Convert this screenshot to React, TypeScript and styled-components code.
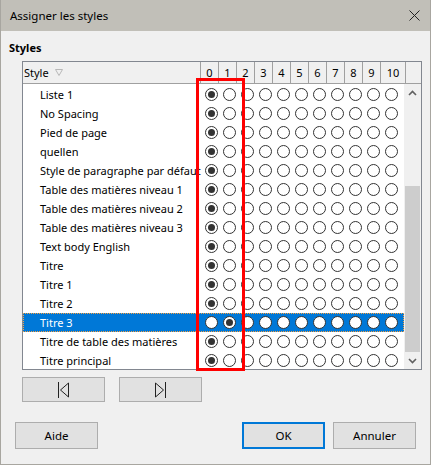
import React from 'react';
import styled, { createGlobalStyle } from 'styled-components';

const GlobalStyle = createGlobalStyle`
  html, body {
    margin: 0;
    padding: 0;
    background: #f0f0f0;
  }
  body {
    font-family: 'Noto Sans', 'Open Sans', sans-serif;
    font-size: 11px;
    color: #000;
  }
`;

const Window = styled.div`
  width: 431px;
  height: 465px;
  box-sizing: border-box;
  border: 1px solid #a8a6a0;
  border-top: none;
  background: #f0f0f0;
  display: flex;
  flex-direction: column;
`;

const TitleBar = styled.div`
  height: 31px;
  flex: none;
  background: #c1bfb8;
  display: flex;
  align-items: center;
  justify-content: space-between;
  padding: 0 10px 0 9px;
  font-size: 11.5px;
`;

const Content = styled.div`
  flex: 1;
  display: flex;
  flex-direction: column;
  padding: 9px 14px 15px 8px;
`;

const SectionLabel = styled.div`
  font-weight: bold;
  line-height: 16px;
  margin-bottom: 5px;
`;

const TableWrap = styled.div`
  position: relative;
  margin-left: 13px;
  width: 400px;
  height: 309px;
  box-sizing: border-box;
  border: 1px solid #828790;
  background: #fff;
  display: flex;
  flex-direction: column;
`;

const HeaderRow = styled.div`
  height: 21px;
  flex: none;
  display: grid;
  grid-template-columns: 178px repeat(10, 18px) 25px 1fr;
  background: #f0f0f0;
  border-bottom: 1px solid #a0a0a0;
`;

const HeaderCell = styled.div<{ $left?: boolean }>`
  display: flex;
  align-items: center;
  justify-content: ${(p) => (p.$left ? 'flex-start' : 'center')};
  padding-left: ${(p) => (p.$left ? '1px' : '0')};
  gap: 6px;
  border-right: 1px solid #a0a0a0;
  box-sizing: border-box;
  &:last-child {
    border-right: none;
  }
`;

const Body = styled.div`
  flex: 1;
  display: flex;
  min-height: 0;
`;

const Rows = styled.div`
  flex: 1;
  padding-top: 1px;
`;

const Row = styled.div<{ $selected?: boolean }>`
  height: 19px;
  box-sizing: border-box;
  display: grid;
  grid-template-columns: 178px repeat(11, 18px);
  align-items: center;
  background: ${(p) => (p.$selected ? '#0078d7' : 'transparent')};
  color: ${(p) => (p.$selected ? '#fff' : '#000')};
  border: 1px dotted ${(p) => (p.$selected ? '#f7a040' : 'transparent')};
`;

const Name = styled.div`
  padding-left: 16px;
  white-space: nowrap;
  overflow: hidden;
  padding-right: 6px;
`;

const RadioCell = styled.div`
  display: flex;
  justify-content: center;
  align-items: center;
`;

const Radio = styled.span<{ $checked?: boolean }>`
  width: 13px;
  height: 13px;
  box-sizing: border-box;
  border-radius: 50%;
  border: 1px solid #333;
  background: #fff;
  display: flex;
  align-items: center;
  justify-content: center;
  &::after {
    content: '';
    display: ${(p) => (p.$checked ? 'block' : 'none')};
    width: 7px;
    height: 7px;
    border-radius: 50%;
    background: #333;
  }
`;

const ScrollBar = styled.div`
  width: 17px;
  flex: none;
  background: #f0f0f0;
  display: flex;
  flex-direction: column;
`;

const ScrollArrow = styled.div`
  height: 17px;
  flex: none;
  display: flex;
  align-items: center;
  justify-content: center;
`;

const ScrollTrack = styled.div`
  flex: 1;
  display: flex;
  flex-direction: column;
  justify-content: flex-end;
  padding: 0 1px;
`;

const ScrollThumb = styled.div`
  height: 166px;
  background: #cdcdcd;
`;

const Highlight = styled.div`
  position: absolute;
  left: 173px;
  top: 16px;
  width: 49px;
  height: 293px;
  box-sizing: border-box;
  border: 3px solid #f00;
  pointer-events: none;
`;

const NavRow = styled.div`
  display: flex;
  gap: 14px;
  margin: 7px 0 0 13px;
`;

const BottomRow = styled.div`
  display: flex;
  margin-top: 20px;
  padding-left: 6px;
`;

const Button = styled.button<{ $default?: boolean; $tall?: boolean }>`
  width: 83px;
  height: ${(p) => (p.$tall ? '27px' : '25px')};
  box-sizing: border-box;
  background: #e1e1e1;
  border: ${(p) => (p.$default ? '2px solid #0078d7' : '1px solid #adadad')};
  font-family: inherit;
  font-size: 11.5px;
  color: #000;
  padding: 0;
  display: flex;
  align-items: center;
  justify-content: center;
`;

const Spacer = styled.div`
  flex: 1;
`;

const RightButtons = styled.div`
  display: flex;
  gap: 8px;
`;

const styles = [
  'Liste 1',
  'No Spacing',
  'Pied de page',
  'quellen',
  'Style de paragraphe par défaut',
  'Table des matières niveau 1',
  'Table des matières niveau 2',
  'Table des matières niveau 3',
  'Text body English',
  'Titre',
  'Titre 1',
  'Titre 2',
  'Titre 3',
  'Titre de table des matières',
  'Titre principal',
];

const levels = [0, 1, 2, 3, 4, 5, 6, 7, 8, 9, 10];

const SortIcon = () => (
  <svg width="8" height="7" viewBox="0 0 8 7">
    <path d="M0.5 0.5 H7.5 L4 6.5 Z" fill="none" stroke="#b8b8b8" strokeWidth="1" />
  </svg>
);

const CloseIcon = () => (
  <svg width="11" height="11" viewBox="0 0 11 11">
    <path d="M0.5 0.5 L10.5 10.5 M10.5 0.5 L0.5 10.5" stroke="#222" strokeWidth="1" />
  </svg>
);

const FirstIcon = () => (
  <svg width="11" height="16" viewBox="0 0 11 16">
    <path d="M0.5 0 V16 M10.5 1 L2.5 8 L10.5 15 Z" fill="none" stroke="#222" strokeWidth="1" />
  </svg>
);

const LastIcon = () => (
  <svg width="11" height="16" viewBox="0 0 11 16">
    <path d="M10.5 0 V16 M0.5 1 L8.5 8 L0.5 15 Z" fill="none" stroke="#222" strokeWidth="1" />
  </svg>
);

const Chevron = ({ up }: { up?: boolean }) => (
  <svg width="9" height="6" viewBox="0 0 9 6">
    <path
      d={up ? 'M1 5 L4.5 1.5 L8 5' : 'M1 1 L4.5 4.5 L8 1'}
      fill="none"
      stroke="#606060"
      strokeWidth="1.6"
    />
  </svg>
);

export default function App() {
  return (
    <>
      <GlobalStyle />
      <Window>
        <TitleBar>
          <span>Assigner les styles</span>
          <CloseIcon />
        </TitleBar>
        <Content>
          <SectionLabel>Styles</SectionLabel>
          <TableWrap>
            <HeaderRow>
              <HeaderCell $left>
                Style <SortIcon />
              </HeaderCell>
              {levels.map((l) => (
                <HeaderCell key={l}>{l}</HeaderCell>
              ))}
              <HeaderCell />
            </HeaderRow>
            <Body>
              <Rows>
                {styles.map((s) => {
                  const selected = s === 'Titre 3';
                  const checkedLevel = selected ? 1 : 0;
                  return (
                    <Row key={s} $selected={selected}>
                      <Name>{s}</Name>
                      {levels.map((l) => (
                        <RadioCell key={l}>
                          <Radio $checked={l === checkedLevel} />
                        </RadioCell>
                      ))}
                    </Row>
                  );
                })}
              </Rows>
              <ScrollBar>
                <ScrollArrow>
                  <Chevron up />
                </ScrollArrow>
                <ScrollTrack>
                  <ScrollThumb />
                </ScrollTrack>
                <ScrollArrow>
                  <Chevron />
                </ScrollArrow>
              </ScrollBar>
            </Body>
            <Highlight />
          </TableWrap>
          <NavRow>
            <Button>
              <FirstIcon />
            </Button>
            <Button>
              <LastIcon />
            </Button>
          </NavRow>
          <BottomRow>
            <Button $tall>Aide</Button>
            <Spacer />
            <RightButtons>
              <Button $tall $default>
                OK
              </Button>
              <Button $tall>Annuler</Button>
            </RightButtons>
          </BottomRow>
        </Content>
      </Window>
    </>
  );
}
